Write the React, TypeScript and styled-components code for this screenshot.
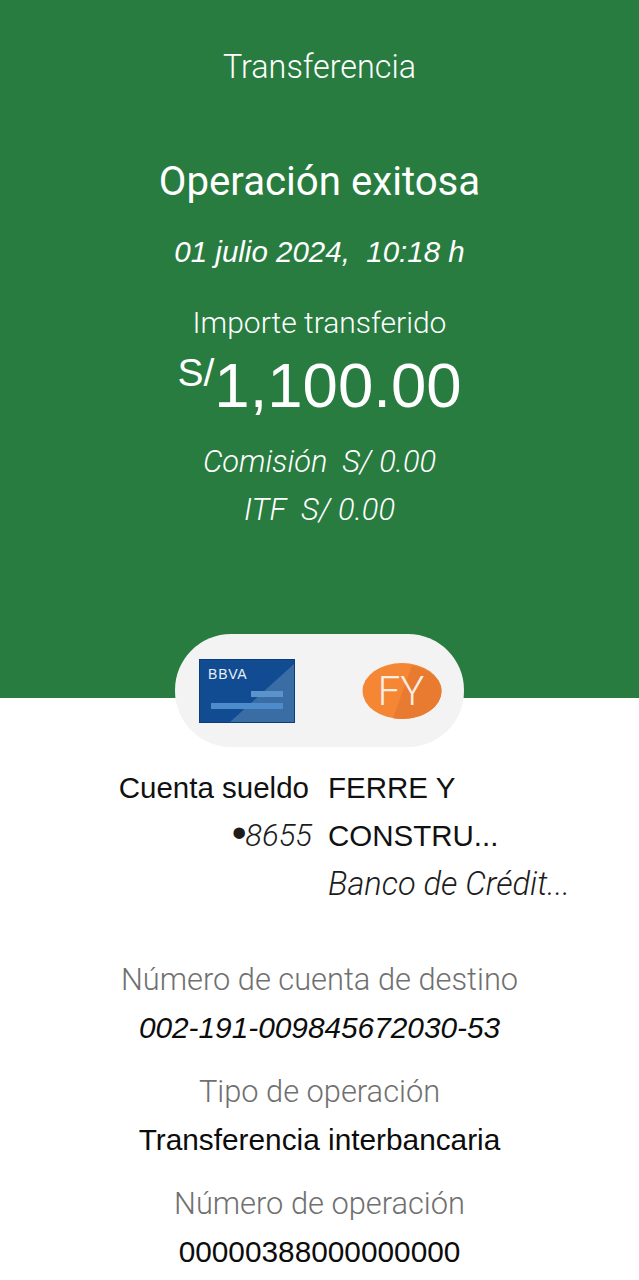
import React from 'react';
import styled, { createGlobalStyle } from 'styled-components';

const sans = '"Liberation Sans", Arial, sans-serif';

const GlobalStyle = createGlobalStyle`
  html, body { margin: 0; padding: 0; background: #ffffff; }
  body { font-family: Roboto, "Liberation Sans", Arial, sans-serif; font-weight: 300; }
`;

const Page = styled.div`
  width: 639px;
  height: 1280px;
  overflow: hidden;
  background: #ffffff;
`;

const Hero = styled.header`
  height: 698px;
  box-sizing: border-box;
  padding-top: 43px;
  background: #287c40;
  color: #ffffff;
  display: flex;
  flex-direction: column;
  align-items: center;
`;

const HeroTitle = styled.div`
  font-size: 32.3px;
  line-height: 48px;
`;

const Status = styled.h1`
  margin: 67px 0 0;
  font-size: 40.2px;
  line-height: 48px;
  font-weight: 400;
`;

const DateLine = styled.div`
  margin-top: 22px;
  font-family: ${sans};
  font-weight: 400;
  font-size: 29.5px;
  line-height: 48px;
  font-style: italic;
  white-space: pre;
`;

const AmountLabel = styled.div`
  margin-top: 23px;
  font-size: 30px;
  line-height: 48px;
`;

const Amount = styled.div`
  margin-top: 2px;
  display: flex;
  align-items: flex-start;
  font-family: ${sans};
  font-weight: 400;
  font-size: 63.5px;
  line-height: 72px;
`;

const Currency = styled.span`
  font-size: 39px;
  line-height: 48px;
`;

const Fees = styled.div`
  margin-top: 17px;
  text-align: center;
  font-size: 30.8px;
  line-height: 48px;
  font-style: italic;
  white-space: pre;
`;

const LogoPill = styled.div`
  width: 289px;
  height: 113px;
  margin: -64px auto 0;
  position: relative;
  box-sizing: border-box;
  padding: 0 22px 0 24px;
  border-radius: 56px;
  background: #f3f3f4;
  display: flex;
  align-items: center;
  justify-content: space-between;
`;

const Accounts = styled.section`
  margin-top: 17px;
  display: grid;
  grid-template-columns: 309px 1fr;
  column-gap: 19px;
  font-family: ${sans};
  font-weight: 400;
  font-size: 29.5px;
  line-height: 48px;
  color: #111111;
`;

const AccountFrom = styled.div`
  text-align: right;
`;

const AccountTo = styled.div``;

const Muted = styled.div`
  font-style: italic;
  font-family: Roboto, ${sans};
  font-weight: 300;
  font-size: 32.6px;
  color: #1c1c1c;
`;

const Mask = styled(Muted)`
  font-size: 31px;
  margin-right: -3px;
`;

const Dot = styled.span`
  font-family: ${sans};
  font-size: 42px;
  line-height: 0;
  margin-right: -1px;
  vertical-align: -1px;
`;

const Detail = styled.section<{ $gap: number }>`
  margin-top: ${(p) => p.$gap}px;
  text-align: center;
  line-height: 48px;
`;

const DetailLabel = styled.div`
  color: #707070;
  font-size: 30.8px;
`;

const DetailValue = styled.div<{ $italic?: boolean }>`
  color: #0c0c0c;
  font-family: ${sans};
  font-weight: 400;
  font-size: 29.8px;
  font-style: ${(p) => (p.$italic ? 'italic' : 'normal')};
`;

const BankCard = () => (
  <svg width="96" height="64" viewBox="0 0 96 64">
    <rect width="96" height="64" fill="#0b4488" />
    <rect x="0.5" y="0.5" width="95" height="63" fill="#114c93" stroke="#0a3f7e" />
    <path d="M31 63 L95 5 V63 Z" fill="#3b6da5" />
    <rect x="52" y="32" width="32" height="6" fill="#5b93cb" />
    <rect x="12" y="44" width="72" height="6" fill="#4d8ccb" />
    <text x="9" y="20" fill="#e8eef6" fontFamily="Liberation Sans, Arial, sans-serif" fontSize="14" letterSpacing="0.8">
      BBVA
    </text>
  </svg>
);

const InitialsBadge = () => (
  <svg width="80" height="56" viewBox="0 0 80 56">
    <ellipse cx="40" cy="28" rx="39.5" ry="28" fill="#f58634" />
    <path d="M50 2.6 C67 6 79.5 16 79.5 28 C79.5 43.5 62 56 40 56 C37 56 34 55.8 31 55.3 Z" fill="#e87b2f" />
    <text x="39" y="42" textAnchor="middle" fill="#fbeee2" fontFamily="Roboto, sans-serif" fontWeight="300" fontSize="40">
      FY
    </text>
  </svg>
);

export default function App() {
  return (
    <Page>
      <GlobalStyle />
      <Hero>
        <HeroTitle>Transferencia</HeroTitle>
        <Status>Operación exitosa</Status>
        <DateLine>01 julio 2024,  10:18 h</DateLine>
        <AmountLabel>Importe transferido</AmountLabel>
        <Amount>
          <Currency>S/</Currency>1,100.00
        </Amount>
        <Fees>
          <div>Comisión  S/ 0.00</div>
          <div>ITF  S/ 0.00</div>
        </Fees>
      </Hero>
      <LogoPill>
        <BankCard />
        <InitialsBadge />
      </LogoPill>
      <Accounts>
        <AccountFrom>
          <div>Cuenta sueldo</div>
          <Mask><Dot>•</Dot>8655</Mask>
        </AccountFrom>
        <AccountTo>
          <div>FERRE Y</div>
          <div>CONSTRU...</div>
          <Muted>Banco de Crédit...</Muted>
        </AccountTo>
      </Accounts>
      <Detail $gap={48}>
        <DetailLabel>Número de cuenta de destino</DetailLabel>
        <DetailValue $italic>002-191-009845672030-53</DetailValue>
      </Detail>
      <Detail $gap={16}>
        <DetailLabel>Tipo de operación</DetailLabel>
        <DetailValue>Transferencia interbancaria</DetailValue>
      </Detail>
      <Detail $gap={16}>
        <DetailLabel>Número de operación</DetailLabel>
        <DetailValue>00000388000000000</DetailValue>
      </Detail>
    </Page>
  );
}
